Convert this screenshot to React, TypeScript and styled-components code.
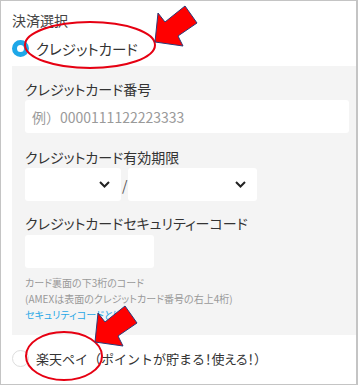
import React from "react";
import styled, { createGlobalStyle } from "styled-components";

const Global = createGlobalStyle`
  html, body { margin: 0; padding: 0; background: #fff; }
  body { font-family: "Noto Sans CJK JP", "Noto Sans", sans-serif; }
  * { box-sizing: border-box; }
`;

const Frame = styled.div`
  position: relative;
  width: 358px;
  height: 385px;
  border: 1px solid #c4c4c4;
  border-right-width: 2px;
  overflow: hidden;
  background: #fff;
  padding: 9px 0 0 11px;
  font-family: "Noto Sans CJK JP", sans-serif;
  font-feature-settings: "palt";
  color: #333;
`;

const Title = styled.div`
  font-size: 14px;
  line-height: 20px;
  color: #444;
`;

const RadioRow = styled.div<{ $mt: number; $fs: number; $palt?: boolean }>`
  display: flex;
  align-items: center;
  gap: 7px;
  height: 20px;
  margin-top: ${(p) => p.$mt}px;
  font-size: ${(p) => p.$fs}px;
  font-feature-settings: ${(p) => (p.$palt ? '"palt"' : "normal")};
  color: #333;
  white-space: nowrap;
`;

const Tight = styled.span`
  font-feature-settings: "palt";
`;

const Radio = styled.span<{ $on?: boolean }>`
  width: 17px;
  height: 17px;
  border-radius: 50%;
  flex: none;
  background: #fff;
  border: ${(p) => (p.$on ? "5.5px solid #1ea7e8" : "1px solid #ddd")};
`;

const Panel = styled.div`
  margin-top: 8px;
  background: #f4f4f4;
  padding: 13px 6px 12px 13px;
  display: flex;
  flex-direction: column;
`;

const Label = styled.div<{ $mt?: number; $mb?: number }>`
  font-size: 14px;
  line-height: 20px;
  color: #333;
  margin-top: ${(p) => p.$mt ?? 0}px;
  margin-bottom: ${(p) => p.$mb ?? 1}px;
`;

const TextBox = styled.div<{ $w: number }>`
  width: ${(p) => p.$w}px;
  height: 33px;
  background: #fff;
  border-radius: 3px;
  display: flex;
  align-items: center;
  padding-left: 7px;
  font-size: 14px;
  font-feature-settings: normal;
  color: #9a9a9a;
`;

const SelectRow = styled.div`
  display: flex;
  align-items: center;
  gap: 1px;
`;

const SelectBox = styled.div<{ $w: number }>`
  width: ${(p) => p.$w}px;
  height: 33px;
  background: #fff;
  border-radius: 3px;
  display: flex;
  align-items: center;
  justify-content: flex-end;
  padding-right: 11px;
`;

const Slash = styled.span`
  font-size: 14px;
  color: #555;
  width: 5px;
  text-align: center;
`;

const Help = styled.div<{ $mt?: number }>`
  font-size: 10px;
  line-height: 16px;
  color: #999;
  margin-top: ${(p) => p.$mt ?? 0}px;
  white-space: nowrap;
`;

const Link = styled(Help)`
  color: #2aa8e6;
`;

const Overlay = styled.svg`
  position: absolute;
  left: -1px;
  top: -1px;
  width: 358px;
  height: 385px;
  pointer-events: none;
`;

const Chevron = () => (
  <svg width="11" height="7" viewBox="0 0 11 7">
    <polyline points="1,1 5.5,5.5 10,1" fill="none" stroke="#222" strokeWidth="2" />
  </svg>
);

const arrow = "155,42 158,13 165,22 185,6 197,23 178,36 183,46";

export default function App() {
  return (
    <>
      <Global />
      <Frame>
        <Title>決済選択</Title>
        <RadioRow $mt={8} $fs={14.5} $palt>
          <Radio $on />
          <span>クレジットカード</span>
        </RadioRow>
        <Panel>
          <Label>クレジットカード番号</Label>
          <TextBox $w={324}>例）0000111122223333</TextBox>
          <Label $mt={14}>クレジットカード有効期限</Label>
          <SelectRow>
            <SelectBox $w={96}>
              <Chevron />
            </SelectBox>
            <Slash>/</Slash>
            <SelectBox $w={129}>
              <Chevron />
            </SelectBox>
          </SelectRow>
          <Label $mt={12} $mb={2}>クレジットカードセキュリティーコード</Label>
          <TextBox $w={129} />
          <Help $mt={7}>カード裏面の下3桁のコード</Help>
          <Help>(AMEXは表面のクレジットカード番号の右上4桁)</Help>
          <Link>セキュリティコードとは</Link>
        </Panel>
        <RadioRow $mt={13} $fs={13}>
          <Radio />
          <span>
            楽天ペイ（ポイントが貯まる<Tight>！使える！</Tight>）
          </span>
        </RadioRow>
        <Overlay viewBox="0 0 358 385">
          <ellipse cx="90" cy="45" rx="65" ry="23" fill="none" stroke="#e60012" strokeWidth="2" />
          <ellipse cx="64" cy="356" rx="38" ry="24" fill="none" stroke="#e60012" strokeWidth="2" />
          <polygon points={arrow} fill="#ff0000" stroke="#2b3a78" strokeWidth="1" />
          <polygon points={arrow} transform="translate(-60 300)" fill="#ff0000" stroke="#2b3a78" strokeWidth="1" />
        </Overlay>
      </Frame>
    </>
  );
}
